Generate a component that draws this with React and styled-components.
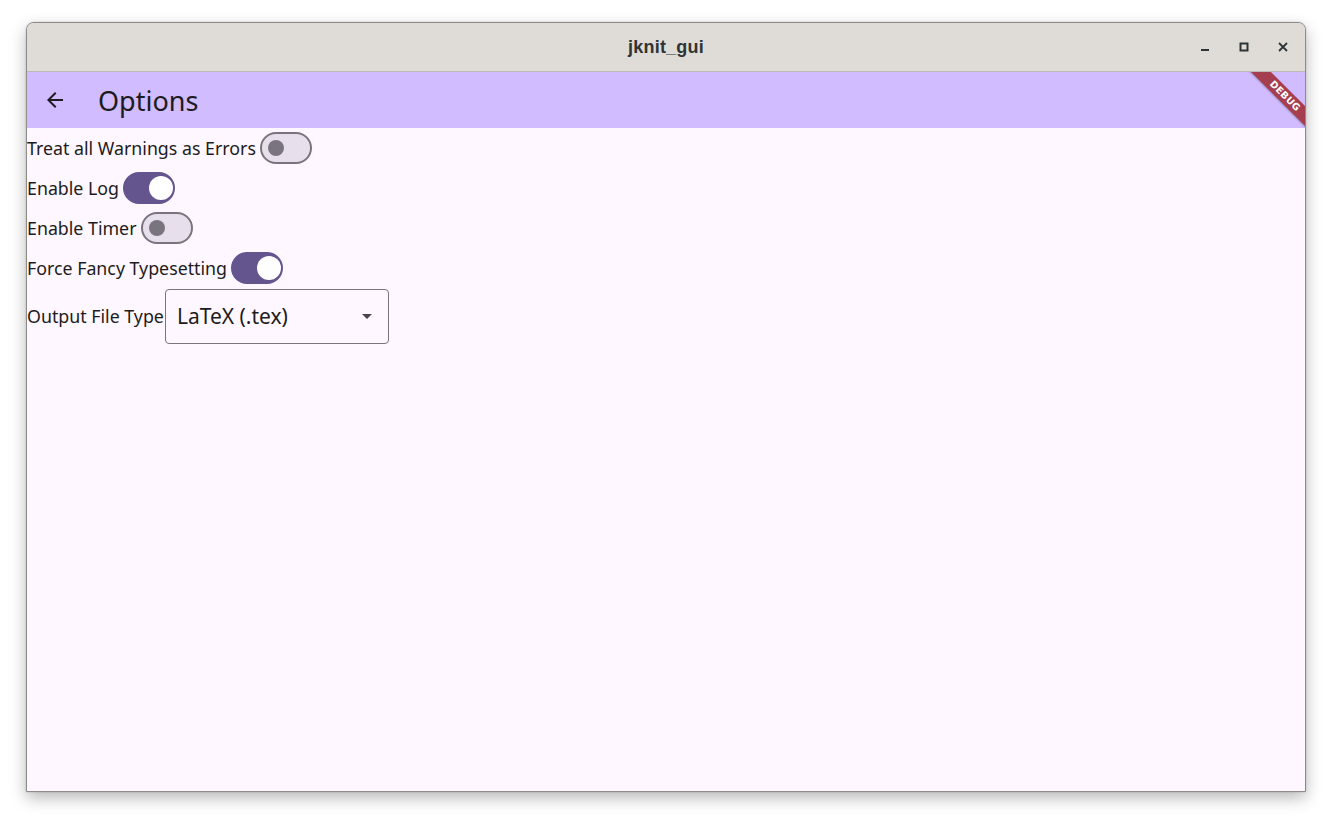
import React, { useState } from 'react';
import styled, { createGlobalStyle } from 'styled-components';

const GlobalStyle = createGlobalStyle`
  html, body {
    margin: 0;
    padding: 0;
    background: #ffffff;
  }
  body {
    font-family: "Noto Sans", "DejaVu Sans", sans-serif;
  }
`;

const Desktop = styled.div`
  width: 1332px;
  height: 821px;
  padding: 22px 0 0 26px;
  box-sizing: border-box;
`;

const Window = styled.div`
  width: 1280px;
  height: 770px;
  box-sizing: border-box;
  border: 1px solid #8e8c8a;
  border-radius: 8px 8px 0 0;
  overflow: hidden;
  display: flex;
  flex-direction: column;
  box-shadow: 0 6px 16px rgba(0, 0, 0, 0.28), 0 0 2px rgba(0, 0, 0, 0.2);
  background: #fef7ff;
`;

const TitleBar = styled.div`
  height: 48px;
  flex: none;
  background: #dfdcd8;
  border-bottom: 1px solid #bdbab6;
  display: grid;
  grid-template-columns: 1fr auto 1fr;
  align-items: center;
`;

const Title = styled.div`
  grid-column: 2;
  font-family: "Liberation Sans", Arial, sans-serif;
  font-weight: bold;
  font-size: 18px;
  color: #2e3436;
  letter-spacing: 0.2px;
`;

const WinButtons = styled.div`
  grid-column: 3;
  justify-self: end;
  display: flex;
  gap: 15px;
  padding-right: 10px;
`;

const WinButton = styled.div`
  width: 24px;
  height: 24px;
  display: flex;
  align-items: center;
  justify-content: center;
  color: #2e3436;
`;

const AppArea = styled.div`
  position: relative;
  flex: 1;
  display: flex;
  flex-direction: column;
  overflow: hidden;
`;

const AppBar = styled.div`
  height: 56px;
  flex: none;
  background: #d0bcff;
  display: flex;
  align-items: center;
  padding-left: 16px;
`;

const BackButton = styled.div`
  width: 24px;
  height: 24px;
  display: flex;
  align-items: center;
  justify-content: center;
  color: #1d1b20;
`;

const AppTitle = styled.div`
  margin-left: 31px;
  font-size: 27px;
  color: #1d1b20;
  line-height: 32px;
  margin-top: 1px;
`;

const Banner = styled.div`
  position: absolute;
  top: 17px;
  right: -38px;
  width: 116px;
  height: 14px;
  background: #a53e4f;
  color: #ffffff;
  font-family: "DejaVu Sans", sans-serif;
  font-weight: bold;
  font-size: 9.5px;
  line-height: 14px;
  text-align: center;
  letter-spacing: 0.3px;
  transform: rotate(45deg);
  box-shadow: 0 1px 2px rgba(0, 0, 0, 0.25);
`;

const Content = styled.div`
  display: flex;
  flex-direction: column;
  align-items: flex-start;
`;

const Row = styled.div`
  display: flex;
  align-items: center;
  height: ${p => (p.$tall ? '56px' : '40px')};
`;

const Label = styled.span`
  font-size: 17.8px;
  color: #1d1b20;
`;

const Track = styled.button`
  position: relative;
  width: 52px;
  height: 32px;
  box-sizing: border-box;
  border-radius: 16px;
  padding: 0;
  cursor: pointer;
  border: 2px solid ${p => (p.$on ? '#65558f' : '#79747e')};
  background: ${p => (p.$on ? '#65558f' : '#e7e0ec')};
  margin-left: 4px;
`;

const Thumb = styled.span`
  position: absolute;
  top: 50%;
  left: ${p => (p.$on ? '24px' : '6px')};
  width: ${p => (p.$on ? '24px' : '16px')};
  height: ${p => (p.$on ? '24px' : '16px')};
  margin-top: ${p => (p.$on ? '-12px' : '-8px')};
  border-radius: 50%;
  background: ${p => (p.$on ? '#ffffff' : '#79747e')};
`;

const Dropdown = styled.div`
  width: 224px;
  height: 55px;
  box-sizing: border-box;
  border: 1px solid #79747e;
  border-radius: 4px;
  display: flex;
  align-items: center;
  padding: 0 16px 0 11px;
  margin-left: 1px;
`;

const DropText = styled.span`
  flex: 1;
  font-size: 21px;
  color: #1d1b20;
`;

function Switch({ on, onToggle }) {
  return (
    <Track $on={on} onClick={onToggle}>
      <Thumb $on={on} />
    </Track>
  );
}

const options = [
  { key: 'werror', label: 'Treat all Warnings as Errors', on: false },
  { key: 'log', label: 'Enable Log', on: true },
  { key: 'timer', label: 'Enable Timer', on: false },
  { key: 'fancy', label: 'Force Fancy Typesetting', on: true },
];

export default function App() {
  const [state, setState] = useState(
    Object.fromEntries(options.map(o => [o.key, o.on]))
  );
  const toggle = key => setState(s => ({ ...s, [key]: !s[key] }));

  return (
    <Desktop>
      <GlobalStyle />
      <Window>
        <TitleBar>
          <Title>jknit_gui</Title>
          <WinButtons>
            <WinButton>
              <svg width="10" height="10" viewBox="0 0 10 10">
                <rect x="1" y="7" width="8" height="2" fill="currentColor" />
              </svg>
            </WinButton>
            <WinButton>
              <svg width="10" height="10" viewBox="0 0 10 10">
                <rect x="1.5" y="1.5" width="7" height="7" fill="none" stroke="currentColor" strokeWidth="2" />
              </svg>
            </WinButton>
            <WinButton>
              <svg width="10" height="10" viewBox="0 0 10 10">
                <path d="M1 1L9 9M9 1L1 9" stroke="currentColor" strokeWidth="1.8" />
              </svg>
            </WinButton>
          </WinButtons>
        </TitleBar>
        <AppArea>
          <AppBar>
            <BackButton>
              <svg width="24" height="24" viewBox="0 0 24 24">
                <path d="M20 11H7.83l5.59-5.59L12 4l-8 8 8 8 1.41-1.41L7.83 13H20v-2z" fill="currentColor" />
              </svg>
            </BackButton>
            <AppTitle>Options</AppTitle>
          </AppBar>
          <Banner>DEBUG</Banner>
          <Content>
            {options.map(o => (
              <Row key={o.key}>
                <Label>{o.label}</Label>
                <Switch on={state[o.key]} onToggle={() => toggle(o.key)} />
              </Row>
            ))}
            <Row $tall>
              <Label>Output File Type</Label>
              <Dropdown>
                <DropText>LaTeX (.tex)</DropText>
                <svg width="10" height="5" viewBox="0 0 10 5">
                  <path d="M0 0L5 5L10 0z" fill="#49454f" />
                </svg>
              </Dropdown>
            </Row>
          </Content>
        </AppArea>
      </Window>
    </Desktop>
  );
}
